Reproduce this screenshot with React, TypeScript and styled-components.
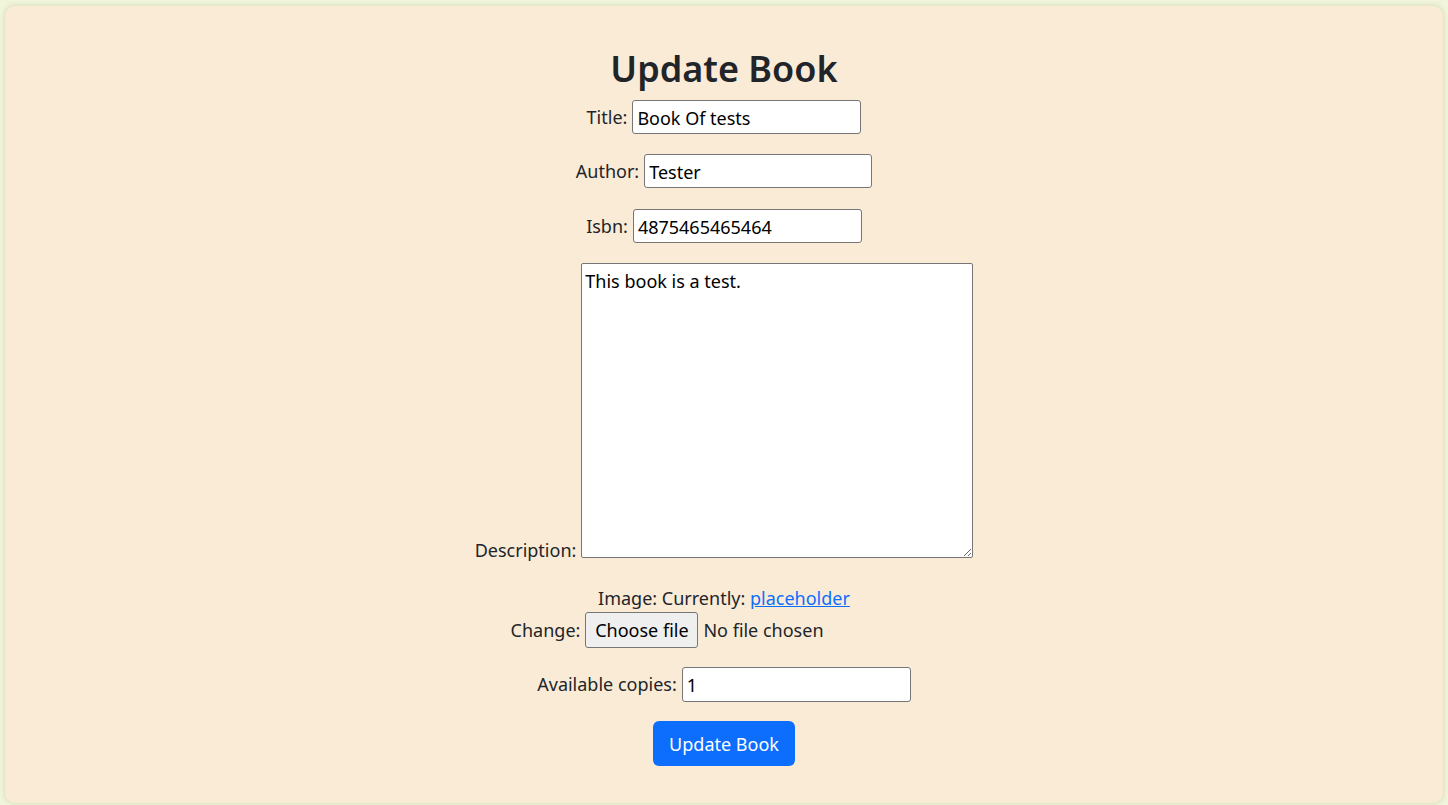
import React from "react";
import styled, { createGlobalStyle } from "styled-components";

const Global = createGlobalStyle`
  html, body { margin: 0; padding: 0; }
  body {
    background: #f1f5dc;
    font-family: "Noto Sans", "Open Sans", sans-serif;
    color: #212529;
  }
  * { box-sizing: border-box; }
`;

const Page = styled.div`
  height: 805px;
  padding: 6px 5px 2px 5px;
`;

const Card = styled.main`
  height: 100%;
  background: #faebd7;
  border-radius: 10px;
  box-shadow: 0 0 4px 1px rgba(215, 222, 185, 0.9);
  display: flex;
  flex-direction: column;
  align-items: center;
  padding-top: 40px;
`;

const Heading = styled.h1`
  margin: 0 0 8px 0;
  font-size: 36px;
  line-height: 46px;
  font-weight: 600;
  color: #212529;
`;

const Form = styled.form`
  display: flex;
  flex-direction: column;
  align-items: center;
  font-size: 18px;
`;

const Row = styled.div<{ $mb: number; $h?: number; $end?: boolean }>`
  display: flex;
  justify-content: center;
  align-items: ${(p) => (p.$end ? "flex-end" : "center")};
  gap: 5px;
  height: ${(p) => (p.$h ? `${p.$h}px` : "auto")};
  margin-bottom: ${(p) => p.$mb}px;
`;

const Label = styled.label<{ $drop?: number }>`
  color: #212529;
  line-height: 1.5;
  white-space: nowrap;
  margin-bottom: ${(p) => (p.$drop ? `-${p.$drop}px` : "0")};
`;

const TextInput = styled.input<{ $w: number; $h?: number }>`
  width: ${(p) => p.$w}px;
  height: ${(p) => p.$h ?? 34}px;
  border: 1px solid #767676;
  border-radius: 3px;
  padding: 1px 4px 0 4px;
  background: #fff;
  color: #000;
  font: inherit;
  outline: none;
`;

const Area = styled.textarea`
  width: 392px;
  height: 295px;
  border: 1px solid #767676;
  border-radius: 2px;
  padding: 6px 3px 3px 3px;
  background: #fff;
  color: #000;
  font: inherit;
  line-height: 1.33;
  resize: both;
  outline: none;
`;

const TextLine = styled.div`
  height: 29px;
  padding-top: 2px;
  line-height: 27px;
  white-space: nowrap;
`;

const Link = styled.a`
  color: #0d6efd;
  text-decoration: underline;
`;

const FileBox = styled.div`
  display: flex;
  align-items: center;
  gap: 5px;
  width: 352px;
`;

const FileButton = styled.button`
  width: 113px;
  height: 36px;
  background: #efefef;
  border: 1px solid #767676;
  border-radius: 3px;
  color: #000;
  font: inherit;
  padding: 0;
`;

const FileText = styled.span`
  color: #212529;
  white-space: nowrap;
`;

const Submit = styled.button`
  width: 142px;
  height: 45px;
  background: #0d6efd;
  border: none;
  border-radius: 6px;
  color: #fff;
  font: inherit;
  padding: 0;
`;

export default function App() {
  return (
    <>
      <Global />
      <Page>
        <Card>
          <Heading>Update Book</Heading>
          <Form onSubmit={(e) => e.preventDefault()}>
            <Row $mb={20} $h={34}>
              <Label htmlFor="t">Title:</Label>
              <TextInput id="t" $w={229} defaultValue="Book Of tests" />
            </Row>
            <Row $mb={21} $h={34}>
              <Label htmlFor="a">Author:</Label>
              <TextInput id="a" $w={228} defaultValue="Tester" />
            </Row>
            <Row $mb={20} $h={34}>
              <Label htmlFor="i">Isbn:</Label>
              <TextInput id="i" $w={229} defaultValue="4875465465464" />
            </Row>
            <Row $mb={25} $end>
              <Label htmlFor="d" $drop={6}>Description:</Label>
              <Area id="d" defaultValue="This book is a test." />
            </Row>
            <TextLine>
              Image: Currently: <Link href="#">placeholder</Link>
            </TextLine>
            <Row $mb={19} $h={36}>
              <Label>Change:</Label>
              <FileBox>
                <FileButton type="button">Choose file</FileButton>
                <FileText>No file chosen</FileText>
              </FileBox>
            </Row>
            <Row $mb={19} $h={35}>
              <Label htmlFor="c">Available copies:</Label>
              <TextInput id="c" $w={229} $h={35} defaultValue="1" />
            </Row>
            <Submit type="submit">Update Book</Submit>
          </Form>
        </Card>
      </Page>
    </>
  );
}
